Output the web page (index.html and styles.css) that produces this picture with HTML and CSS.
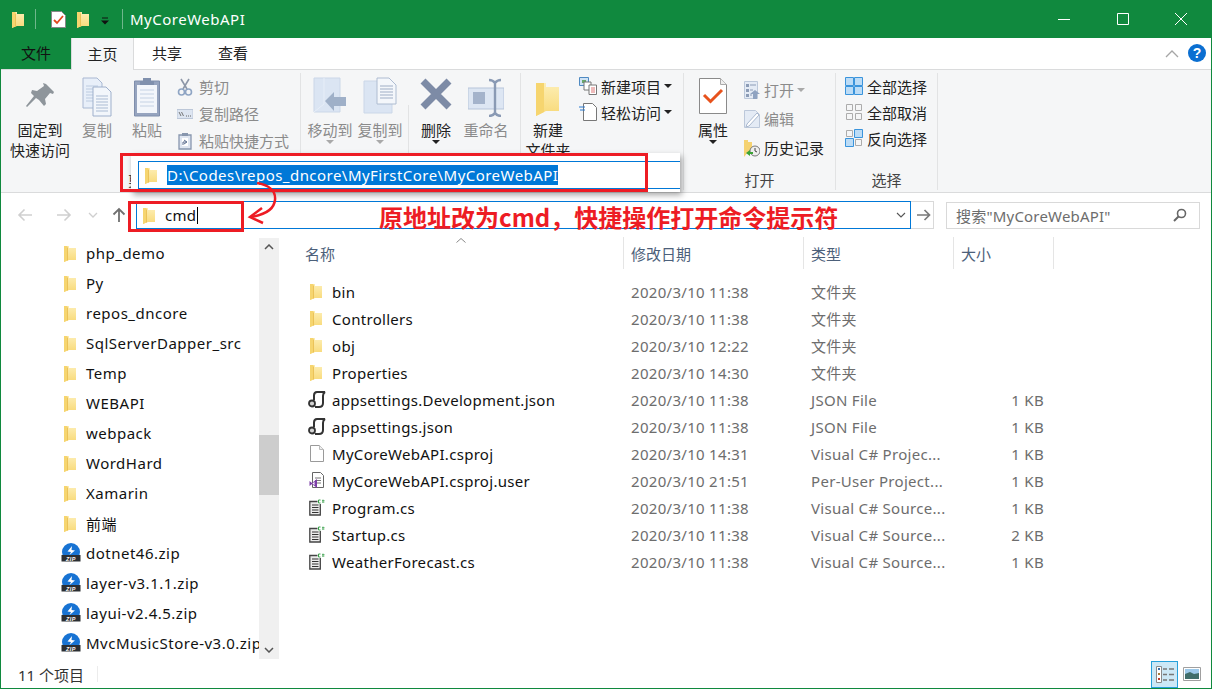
FILE: index.html
```html
<!DOCTYPE html>
<html lang="zh-CN">
<head>
<meta charset="utf-8">
<title>MyCoreWebAPI</title>
<link rel="stylesheet" href="styles.css">
</head>
<body>
<svg class="defs" width="0" height="0" aria-hidden="true">
  <defs>
    <linearGradient id="fg" x1="0" y1="0" x2="0" y2="1"><stop offset="0" stop-color="#fdeeb4"/><stop offset="1" stop-color="#f8d977"/></linearGradient>
    <symbol id="folder" viewBox="0 0 12 17">
      <path d="M0 1h5v2h7v12H5l-5 2z" fill="url(#fg)"/>
      <path d="M0 1h3.500v14.300L0 17z" fill="#f6d56f"/>
      <path d="M3.500 2.500v13" stroke="#e7bb4e" stroke-width=".8"/>
    </symbol>
    <symbol id="zip" viewBox="0 0 20 20">
      <circle cx="10" cy="9" r="9" fill="#1873d3"/>
      <path d="M11 3 6.500 8.500 10 9 8.500 12 14 7.500 10.500 7z" fill="#fff"/>
      <path d="M.5 12h19v6.500H.5z" fill="#2b2f33"/>
      <text x="10" y="17.500" class="ziptext" text-anchor="middle">ZIP</text>
    </symbol>
    <symbol id="json" viewBox="0 0 18 17">
      <path d="M6 9V4.500Q6 1 9 1h8q-2 1-2 4v7q0 4-4 4H7" fill="none" stroke="#333" stroke-width="2"/>
      <circle cx="4" cy="12.500" r="3" fill="#d4d4d4" stroke="#333" stroke-width="1.800"/>
    </symbol>
    <symbol id="file" viewBox="0 0 14 17">
      <path d="M.5.5h9l4 4v12H.5z" fill="#fff" stroke="#9a9a9a"/>
      <path d="M9.500.5v4h4" fill="#eee" stroke="#bbb"/>
    </symbol>
    <symbol id="vsuser" viewBox="0 0 16 17">
      <path d="M3.500.5h8l3 3v12h-11z" fill="#fff" stroke="#666"/>
      <path d="M6 6h6M6 8.500h6M6 11h6" stroke="#777"/>
      <path d="M.5 9l2.500 2 5-4v9l-5-4-2.500 2z" fill="#7d3ea8"/>
      <path d="M5.500 9.800v3.400L3.500 11.500z" fill="#fff"/>
    </symbol>
    <symbol id="cs" viewBox="0 0 16 17">
      <path d="M.8 2.500h10.500V16H.8z" fill="#ececec" stroke="#444" stroke-width="1.300"/>
      <path d="M3 6h6.500M3 8.500h6.500M3 11h6.500M3 13.500h6.500" stroke="#333"/>
      <path d="M8.500 0h7v5h-7z" fill="#fff"/>
      <path d="M11.500 1H9.500v3h2" fill="none" stroke="#3aa14a"/>
      <path d="M13 1.500h2.500M13 3h2.500M14 .5v3.500" stroke="#3aa14a" stroke-width=".7"/>
    </symbol>
  </defs>
</svg>

<div class="window">
  <header class="titlebar">
    <svg class="ic-f title-first"><use href="#folder"/></svg>
    <span class="tsep"></span>
    <svg class="ic-prop" viewBox="0 0 15 17"><path d="M.5.5h10l4 4v12H.5z" fill="#fff" stroke="#888"/><path d="M3 9l3 3 6-7" fill="none" stroke="#e2471a" stroke-width="1.800"/></svg>
    <svg class="ic-f title-second"><use href="#folder"/></svg>
    <svg class="ic-drop" viewBox="0 0 8 8"><path d="M1 1h6" stroke="#111" stroke-width="1"/><path d="M0 3.500h8L4 7.500z" fill="#111"/></svg>
    <span class="tsep tsep2"></span>
    <span class="title">MyCoreWebAPI</span>
    <div class="winbtns">
      <svg viewBox="0 0 12 12"><path d="M0 6.500h12" stroke="#fff"/></svg>
      <svg viewBox="0 0 12 12"><path d="M.5.5h11v11H.5z" fill="none" stroke="#fff"/></svg>
      <svg viewBox="0 0 12 12"><path d="M0 0l12 12M12 0 0 12" stroke="#fff"/></svg>
    </div>
  </header>

  <nav class="tabs">
    <span class="tab tab-file">文件</span>
    <span class="tab tab-home">主页</span>
    <span class="tab tab-share">共享</span>
    <span class="tab tab-view">查看</span>
    <svg class="tab-chevron" viewBox="0 0 14 8"><path d="M1 7l6-6 6 6" fill="none" stroke="#a6a6a6" stroke-width="1.300"/></svg>
    <span class="help">?</span>
  </nav>

  <section class="ribbon">
    <div class="group g-clip">
      <div class="group-body">
        <div class="big b-pin">
          <svg class="bigicon" viewBox="0 0 40 40"><path d="M26 7l8 8-1 2-3-1-5 6 1 5-2 2-5-6-3-2-9 9-1-1 8-10-3-3 1-3 5 1 7-5-1-3z" fill="#8e959b"/></svg>
          <span>固定到</span><span>快速访问</span>
        </div>
        <div class="big b-copy dis">
          <svg class="bigicon" viewBox="0 0 32 40"><path d="M2 1h14l5 5v25H2z" fill="#e8eff9" stroke="#a9b8d2"/><path d="M5 9h12M5 12h12M5 15h12M5 18h12M5 21h12M5 24h12" stroke="#bccbe0"/><path d="M12 10h13l5 5v24H12z" fill="#f2f6fb" stroke="#9fb0cc"/><path d="M15 19h12M15 22h12M15 25h12M15 28h12M15 31h12M15 34h12" stroke="#aabbd3"/></svg>
          <span>复制</span>
        </div>
        <div class="big b-paste dis">
          <svg class="bigicon" viewBox="0 0 28 40"><path d="M1.500 4h25v35h-25z" fill="#96a4bf" stroke="#7f8eac"/><path d="M4 8h20v28H4z" fill="#f3f6fb"/><path d="M10 1h8v3h3v4H7V4h3z" fill="#8090ad"/><path d="M7 13h14M7 17h14M7 21h14M7 25h14M7 29h14" stroke="#c5d2e4"/></svg>
          <span>粘贴</span>
        </div>
        <div class="smalls s-clip dis">
          <div class="small"><svg class="smicon" viewBox="0 0 16 18"><path d="M4 1l6 10M12 1 6 11" stroke="#8d97a8" stroke-width="1.600"/><circle cx="4.500" cy="14" r="3" fill="none" stroke="#8fa5c4" stroke-width="1.600"/><circle cx="11.500" cy="14" r="3" fill="none" stroke="#8fa5c4" stroke-width="1.600"/></svg><span>剪切</span></div>
          <div class="small"><svg class="smicon" viewBox="0 0 16 18"><path d="M0 4.500h16v9H0z" fill="#dde5f1" stroke="#bcc7d8"/><path d="M2 7l2 4M4.500 7l2 4" stroke="#666" stroke-width=".9"/><path d="M9 11h1M11 11h1M13 11h1" stroke="#666"/></svg><span>复制路径</span></div>
          <div class="small"><svg class="smicon" viewBox="0 0 16 18"><path d="M2 3h12v14H2z" fill="#dfe6f1" stroke="#8796ae" stroke-width="1.300"/><path d="M5 1h6v3H5z" fill="#8796ae"/><path d="M5 6h6v8H5z" fill="#fff"/><path d="M6 13V10h3M7 8l3 2-3 2" fill="none" stroke="#5a6d8e"/></svg><span>粘贴快捷方式</span></div>
        </div>
      </div>
      <div class="group-label">剪贴板</div>
    </div>

    <div class="group g-org">
      <div class="group-body">
        <div class="big b-move dis">
          <svg class="bigicon" viewBox="0 0 34 40"><path d="M1 1h26v34H1z" fill="#dbe5f3" stroke="#cbd7e8"/><path d="M1 35l10-8V1" fill="none" stroke="#e7eef8"/><path d="M12 24l9-9v5h12v9H21v5z" fill="#9fb0c8"/></svg>
          <span>移动到</span><i class="caret"></i>
        </div>
        <div class="big b-copyto dis">
          <svg class="bigicon" viewBox="0 0 34 40"><path d="M1 4h28v32H1z" fill="#dbe5f3" stroke="#cbd7e8"/><path d="M14 1h12l7 7v19H14z" fill="#f4f7fb" stroke="#aebcd1"/><path d="M17 9h13M17 12h13M17 15h13M17 18h13M17 21h13" stroke="#9eadc5"/></svg>
          <span>复制到</span><i class="caret"></i>
        </div>
        <span class="vsep"></span>
        <div class="big b-del">
          <svg class="bigicon" viewBox="0 0 32 40"><path d="M3 4l26 26M29 4 3 30" stroke="#7d8ba6" stroke-width="7"/></svg>
          <span>删除</span><i class="caret dark"></i>
        </div>
        <div class="big b-ren dis">
          <svg class="bigicon" viewBox="0 0 36 40"><path d="M0 11h36v21H0z" fill="#dde6f3" stroke="#b7c5da"/><path d="M5 15h12v12H5z" fill="#a4b3cb"/><path d="M21 3q4 0 6 3 2-3 6-3M27 6v30M21 39q4 0 6-3 2 3 6 3" fill="none" stroke="#8a9ab4" stroke-width="2.400"/></svg>
          <span>重命名</span>
        </div>
      </div>
      <div class="group-label"></div>
    </div>

    <div class="group g-new">
      <div class="group-body">
        <div class="big b-newf">
          <svg class="bigicon" viewBox="0 0 24 36"><path d="M0 2h10v4h13v24H10L0 35z" fill="url(#fg)"/><path d="M0 2h8v29l-8 4z" fill="#f6d56f"/></svg>
          <span>新建</span><span>文件夹</span>
        </div>
        <div class="smalls s-new">
          <div class="small"><svg class="smicon" viewBox="0 0 18 18"><path d="M.5.5h9v8h-9z" fill="#cfe3f5" stroke="#4f8ac2"/><path d="M3 3h4v3H3z" fill="#6aa76a"/><path d="M5 5h7v8H5z" fill="#fff" stroke="#777"/><path d="M10 8h7.500v9.500H10z" fill="#fff" stroke="#777"/><path d="M12 11h4M12 13h4M12 15h4" stroke="#d77"/></svg><span>新建项目</span><i class="caret dark inl"></i></div>
          <div class="small"><svg class="smicon" viewBox="0 0 18 18"><path d="M4.500.5h9l4 4v13h-13z" fill="#fff" stroke="#777"/><path d="M0 4h6M1 7h5" stroke="#2a7ad0"/></svg><span>轻松访问</span><i class="caret dark inl"></i></div>
        </div>
      </div>
      <div class="group-label"></div>
    </div>

    <div class="group g-open">
      <div class="group-body">
        <div class="big b-prop">
          <svg class="bigicon" viewBox="0 0 30 40"><path d="M1.500 1.500h21l6 6v29h-27z" fill="#fff" stroke="#8a8a8a"/><path d="M22.500 1.500v6h6" fill="#eee" stroke="#aaa"/><path d="M6 18l6.500 6.500L24 13" fill="none" stroke="#e7521c" stroke-width="3"/></svg>
          <span>属性</span><i class="caret dark"></i>
        </div>
        <div class="smalls s-open">
          <div class="small dis"><svg class="smicon" viewBox="0 0 16 18"><path d="M.5.500h13v17H.5z" fill="#e4ebf5" stroke="#bcc8da"/><path d="M2 3h3v3H2zM2 8h3v3H2zM2 13h3v3H2z" fill="#8c9cb6"/><path d="M6 4h6M6 9h3M6 14h2" stroke="#8c9cb6"/><path d="M11 9l5 4h-3v5H9v-5H6z" fill="#8fa3c1"/></svg><span>打开</span><i class="caret inl"></i></div>
          <div class="small dis"><svg class="smicon" viewBox="0 0 16 18"><path d="M.5.500h11l4 4v13H.5z" fill="#e4ebf5" stroke="#bcc8da"/><path d="M3 14L13 3l2 2L5 16l-3 1z" fill="#fff" stroke="#aab9cf"/></svg><span>编辑</span></div>
          <div class="small"><svg class="smicon" viewBox="0 0 16 18"><path d="M0 1h4v2h4v10H4l-4 5z" fill="#f5d271"/><circle cx="11" cy="12" r="5" fill="#eee" stroke="#777"/><path d="M11 9v3l2 1" fill="none" stroke="#444"/><path d="M2 14l4-3v2h3v2H6v2z" fill="#3aa335"/></svg><span>历史记录</span></div>
        </div>
      </div>
      <div class="group-label">打开</div>
    </div>

    <div class="group g-sel">
      <div class="group-body">
        <div class="smalls s-sel">
          <div class="small"><svg class="smicon" viewBox="0 0 18 18"><path d="M.5.500h8v8h-8zM9.500.500h8v8h-8zM.5 9.500h8v8h-8zM9.500 9.500h8v8h-8z" fill="#bcdcf6" stroke="#3a94dc"/></svg><span>全部选择</span></div>
          <div class="small"><svg class="smicon" viewBox="0 0 18 18"><path d="M1.500 1.500h6v6h-6zM10.500 1.500h6v6h-6zM1.500 10.500h6v6h-6zM10.500 10.500h6v6h-6z" fill="#f5f6f7" stroke="#acacac"/></svg><span>全部取消</span></div>
          <div class="small"><svg class="smicon" viewBox="0 0 18 18"><path d="M1.500 1.500h6v6h-6zM10.500 10.500h6v6h-6z" fill="#f5f6f7" stroke="#acacac"/><path d="M9.500.500h8v8h-8zM.5 9.500h8v8h-8z" fill="#bcdcf6" stroke="#3a94dc"/></svg><span>反向选择</span></div>
        </div>
      </div>
      <div class="group-label">选择</div>
    </div>
  </section>

  <section class="addressbar">
    <svg class="navbtn n-back" viewBox="0 0 16 14"><path d="M15 7H2M7.500 1.500 2 7l5.500 5.500" fill="none" stroke="#cfcfcf" stroke-width="1.600"/></svg>
    <svg class="navbtn n-fwd" viewBox="0 0 16 14"><path d="M1 7h13M8.500 1.500 14 7l-5.500 5.500" fill="none" stroke="#cfcfcf" stroke-width="1.600"/></svg>
    <svg class="navbtn n-down" viewBox="0 0 10 6"><path d="M1 1l4 4 4-4" fill="none" stroke="#cfcfcf" stroke-width="1.300"/></svg>
    <svg class="navbtn n-up" viewBox="0 0 14 16"><path d="M7 15V2M1.500 7.500 7 2l5.500 5.500" fill="none" stroke="#707070" stroke-width="1.800"/></svg>
    <div class="addr">
      <svg class="ic-f"><use href="#folder"/></svg>
      <span class="addr-text">cmd</span><i class="textcaret"></i>
      <svg class="addr-chev" viewBox="0 0 10 6"><path d="M1 1l4 4 4-4" fill="none" stroke="#555" stroke-width="1.100"/></svg>
    </div>
    <div class="go"><svg viewBox="0 0 14 12"><path d="M0 6h12M7.500 1 12.500 6l-5 5" fill="none" stroke="#7a7a7a" stroke-width="1.700"/></svg></div>
    <div class="search">
      <span>搜索"MyCoreWebAPI"</span>
      <svg viewBox="0 0 14 14"><circle cx="8.500" cy="5.500" r="4" fill="none" stroke="#666" stroke-width="1.600"/><path d="M5.500 8.500 1 13" stroke="#666" stroke-width="2"/></svg>
    </div>
  </section>

  <main class="content">
    <aside class="nav">
      <ul class="navlist">
        <li><svg class="ic-f"><use href="#folder"/></svg><span>php_demo</span></li>
        <li><svg class="ic-f"><use href="#folder"/></svg><span>Py</span></li>
        <li><svg class="ic-f"><use href="#folder"/></svg><span>repos_dncore</span></li>
        <li><svg class="ic-f"><use href="#folder"/></svg><span>SqlServerDapper_src</span></li>
        <li><svg class="ic-f"><use href="#folder"/></svg><span>Temp</span></li>
        <li><svg class="ic-f"><use href="#folder"/></svg><span>WEBAPI</span></li>
        <li><svg class="ic-f"><use href="#folder"/></svg><span>webpack</span></li>
        <li><svg class="ic-f"><use href="#folder"/></svg><span>WordHard</span></li>
        <li><svg class="ic-f"><use href="#folder"/></svg><span>Xamarin</span></li>
        <li><svg class="ic-f"><use href="#folder"/></svg><span>前端</span></li>
        <li class="z"><svg class="ic-z"><use href="#zip"/></svg><span>dotnet46.zip</span></li>
        <li class="z"><svg class="ic-z"><use href="#zip"/></svg><span>layer-v3.1.1.zip</span></li>
        <li class="z"><svg class="ic-z"><use href="#zip"/></svg><span>layui-v2.4.5.zip</span></li>
        <li class="z"><svg class="ic-z"><use href="#zip"/></svg><span>MvcMusicStore-v3.0.zip</span></li>
      </ul>
      <div class="scroll">
        <svg class="sb-up" viewBox="0 0 10 6"><path d="M1 5l4-4 4 4" fill="none" stroke="#555" stroke-width="1.500"/></svg>
        <div class="thumb"></div>
        <svg class="sb-down" viewBox="0 0 10 6"><path d="M1 1l4 4 4-4" fill="none" stroke="#555" stroke-width="1.500"/></svg>
      </div>
    </aside>
    <div class="details">
      <div class="dhead">
        <span class="c-name">名称</span>
        <span class="c-date">修改日期</span>
        <span class="c-type">类型</span>
        <span class="c-size">大小</span>
        <svg class="sortarrow" viewBox="0 0 10 5"><path d="M.5 4.500 5 .5l4.500 4" fill="none" stroke="#8a8a8a"/></svg>
      </div>
      <div class="row"><span class="c-name"><svg class="ic-f"><use href="#folder"/></svg>bin</span><span class="c-date">2020/3/10 11:38</span><span class="c-type">文件夹</span><span class="c-size"></span></div>
      <div class="row"><span class="c-name"><svg class="ic-f"><use href="#folder"/></svg>Controllers</span><span class="c-date">2020/3/10 11:38</span><span class="c-type">文件夹</span><span class="c-size"></span></div>
      <div class="row"><span class="c-name"><svg class="ic-f"><use href="#folder"/></svg>obj</span><span class="c-date">2020/3/10 12:22</span><span class="c-type">文件夹</span><span class="c-size"></span></div>
      <div class="row"><span class="c-name"><svg class="ic-f"><use href="#folder"/></svg>Properties</span><span class="c-date">2020/3/10 14:30</span><span class="c-type">文件夹</span><span class="c-size"></span></div>
      <div class="row"><span class="c-name"><svg class="ic-j"><use href="#json"/></svg>appsettings.Development.json</span><span class="c-date">2020/3/10 11:38</span><span class="c-type">JSON File</span><span class="c-size">1 KB</span></div>
      <div class="row"><span class="c-name"><svg class="ic-j"><use href="#json"/></svg>appsettings.json</span><span class="c-date">2020/3/10 11:38</span><span class="c-type">JSON File</span><span class="c-size">1 KB</span></div>
      <div class="row"><span class="c-name"><svg class="ic-d"><use href="#file"/></svg>MyCoreWebAPI.csproj</span><span class="c-date">2020/3/10 14:31</span><span class="c-type">Visual C# Projec...</span><span class="c-size">1 KB</span></div>
      <div class="row"><span class="c-name"><svg class="ic-v"><use href="#vsuser"/></svg>MyCoreWebAPI.csproj.user</span><span class="c-date">2020/3/10 21:51</span><span class="c-type">Per-User Project...</span><span class="c-size">1 KB</span></div>
      <div class="row"><span class="c-name"><svg class="ic-v"><use href="#cs"/></svg>Program.cs</span><span class="c-date">2020/3/10 11:38</span><span class="c-type">Visual C# Source...</span><span class="c-size">1 KB</span></div>
      <div class="row"><span class="c-name"><svg class="ic-v"><use href="#cs"/></svg>Startup.cs</span><span class="c-date">2020/3/10 11:38</span><span class="c-type">Visual C# Source...</span><span class="c-size">2 KB</span></div>
      <div class="row"><span class="c-name"><svg class="ic-v"><use href="#cs"/></svg>WeatherForecast.cs</span><span class="c-date">2020/3/10 11:38</span><span class="c-type">Visual C# Source...</span><span class="c-size">1 KB</span></div>
    </div>
  </main>

  <footer class="status">
    <span class="count">11 个项目</span>
    <span class="status-sep"></span>
    <div class="views">
      <div class="view-on"><svg viewBox="0 0 18 17"><path d="M.5.500h5v16h-5z" fill="#fff" stroke="#8a8a8a"/><path d="M2 2h2v2H2z" fill="#3b6fa8"/><path d="M2 7h2v2H2z" fill="#a87a3b"/><path d="M2 12h2v2H2z" fill="#c0392b"/><path d="M7 3h4M13 3h5M7 8.500h4M13 8.500h5M7 14h4M13 14h5" stroke="#777" stroke-width="1.400"/></svg></div>
      <svg class="view-off" viewBox="0 0 18 14"><path d="M.5.500h17v13H.5z" fill="#fff" stroke="#a0a0a0"/><path d="M2 2h14v5H2z" fill="#9cc9ea"/><path d="M2 7l5-2 4 2 5-1v6H2z" fill="#3f6d6a"/></svg>
    </div>
  </footer>

  <div class="popup">
    <div class="popup-field">
      <svg class="ic-f"><use href="#folder"/></svg>
      <span class="selected">D:\Codes\repos_dncore\MyFirstCore\MyCoreWebAPI</span>
    </div>
  </div>
  <div class="redbox rb-top"></div>
  <div class="redbox rb-cmd"></div>
  <svg class="redarrow" viewBox="0 0 40 50"><path d="M10 1C22 3 29 9 28 18 27 28 16 33 4 35" fill="none" stroke="#ed1c24" stroke-width="2.500"/><path d="M15 26 3 35l13 6" fill="none" stroke="#ed1c24" stroke-width="2.500"/></svg>
  <div class="note">原地址改为cmd，快捷操作打开命令提示符</div>
</div>
</body>
</html>
```

FILE: styles.css
```css
* { box-sizing: border-box; }
html, body { margin: 0; padding: 0; }
body { font-family: "Noto Sans", "Noto Sans CJK SC", sans-serif; font-size: 15px; color: #1a1a1a; overflow: hidden; }
ul { list-style: none; margin: 0; padding: 0; }
svg { display: block; flex: none; }
.defs { position: absolute; }
.ziptext { font: italic bold 5.500px "Liberation Sans", sans-serif; fill: #fff; }

.window { position: relative; width: 1212px; height: 689px; display: flex; flex-direction: column; background: #fff; border: 1px solid #10893e; border-top: 0; overflow: hidden; }

.ic-f { width: 12px; height: 17px; }
.ic-z { width: 20px; height: 20px; }
.ic-j { width: 18px; height: 17px; }
.ic-d { width: 14px; height: 17px; }
.ic-v { width: 16px; height: 17px; }

/* title bar */
.titlebar { height: 38px; background: #10893e; display: flex; align-items: center; margin: 0 -1px; padding-left: 12px; flex: none; }
.title-second { margin-left: 11px; }
.tsep { width: 1px; height: 20px; background: #6fb78c; margin: 0 15px 0 11px; }
.tsep2 { margin: 0 7px 0 13px; }
.ic-prop { width: 15px; height: 17px; }
.ic-drop { width: 8px; height: 8px; margin-left: 12px; margin-top: 3px; }
.title { color: #fff; font-size: 15px; letter-spacing: .5px; }
.winbtns { margin-left: auto; display: flex; gap: 46.500px; padding-right: 25px; }
.winbtns svg { width: 12px; height: 12px; }

/* tabs */
.tabs { height: 32px; flex: none; display: flex; align-items: stretch; position: relative; background: #fff; border-bottom: 1px solid #dadbdc; }
.tab { width: 63px; display: flex; align-items: center; justify-content: center; color: #222; padding-bottom: 2px; }
.tab-file { width: 70px; background: #10893e; color: #111; }
.tab-home { background: #f5f6f7; border: 1px solid #dadbdc; border-bottom: 0; border-top: 0; margin-bottom: -1px; }
.tab-share { width: 66px; }
.tab-view { width: 66px; }
.tab-chevron { width: 14px; height: 8px; margin: 12px 0 0 auto; }
.help { width: 18px; height: 18px; border-radius: 50%; background: #0b6fd1; color: #fff; font: bold 14px/18px "Liberation Sans", sans-serif; text-align: center; margin: 6px 5px 0 9px; }

/* ribbon */
.ribbon { height: 123px; flex: none; display: flex; background: #f5f6f7; border-bottom: 1px solid #dadbdc; padding: 3px 0 2px; color: #222; }
.group { display: flex; flex-direction: column; border-right: 1px solid #e2e3e4; height: 117px; }
.group-body { flex: 1; display: flex; min-height: 0; padding-top: 2px; }
.group-label { height: 20px; line-height: 20px; text-align: center; color: #444; flex: none; }
.g-clip { width: 300px; }
.g-org { width: 220px; }
.g-new { width: 163px; }
.g-open { width: 152px; }
.g-sel { width: 102px; }
.dis { color: #8b8b8b; }
.big { display: flex; flex-direction: column; align-items: center; line-height: 20px; white-space: nowrap; }
.bigicon { height: 40px; margin: 2px 0 3px; }
.b-pin { width: 60px; margin-left: 9px; }
.b-pin .bigicon { width: 40px; }
.b-copy { width: 44px; margin-left: 5px; }
.b-copy .bigicon { width: 32px; }
.b-paste { width: 44px; margin-left: 6px; }
.b-paste .bigicon { width: 28px; }
.b-move { width: 50px; margin-left: 4px; }
.b-move .bigicon { width: 34px; }
.b-copyto { width: 50px; }
.b-copyto .bigicon { width: 34px; }
.vsep { width: 1px; margin: 30px 0 0 3px; height: 52px; background: #e2e3e4; }
.b-del { width: 54px; }
.b-del .bigicon { width: 32px; }
.b-ren { width: 46px; }
.b-ren .bigicon { width: 36px; }
.b-newf { width: 54px; }
.b-newf .bigicon { width: 24px; height: 36px; margin: 6px 0 3px; }
.b-prop { width: 58px; }
.b-prop .bigicon { width: 30px; }
.caret { width: 0; height: 0; border: 4px solid transparent; border-top-color: #a9a9a9; border-bottom: 0; display: block; }
.caret.dark { border-top-color: #222; }
.caret.inl { margin: 0 0 0 -1px; }
.smalls { display: flex; flex-direction: column; margin-top: -2px; }
.small { display: flex; align-items: center; gap: 6px; height: 27px; white-space: nowrap; }
.smicon { width: 16px; height: 18px; }
.s-clip { margin-left: 8px; }
.s-new { margin-left: 4px; }
.s-new .small { gap: 4px; height: 26px; }
.s-new .smicon { width: 18px; }
.s-open { margin: 0 0 0 2px; }
.s-open .small { height: 29px; gap: 4px; }
.s-sel { margin-left: 9px; }
.s-sel .small { height: 26px; gap: 4px; }
.s-sel .smicon { width: 18px; }

/* address bar */
.addressbar { height: 42px; flex: none; display: flex; align-items: center; background: #fff; padding-top: 2px; }
.navbtn { flex: none; }
.n-back { width: 16px; height: 14px; margin-left: 16px; }
.n-fwd { width: 16px; height: 14px; margin-left: 23px; }
.n-down { width: 10px; height: 6px; margin-left: 16px; }
.n-up { width: 14px; height: 16px; margin-left: 14px; }
.addr { width: 775px; height: 28px; margin-left: 10px; border: 1px solid #0078d7; display: flex; align-items: center; padding-left: 6px; background: #fff; }
.addr-text { margin-left: 10px; color: #111; letter-spacing: .3px; }
.textcaret { width: 1px; height: 17px; background: #000; margin-left: 1px; }
.addr-chev { width: 10px; height: 6px; margin-left: auto; margin-right: 4px; }
.go { width: 23px; height: 28px; border: 1px solid #d9d9d9; border-left: 0; display: flex; align-items: center; justify-content: center; padding-left: 3px; }
.go svg { width: 14px; height: 12px; }
.search { width: 254px; height: 27px; margin-left: 12px; border: 1px solid #d9d9d9; display: flex; align-items: center; justify-content: space-between; padding: 0 12px 0 9px; color: #6d6d6d; letter-spacing: .2px; }
.search svg { width: 14px; height: 14px; }

/* content */
.content { flex: 1; display: flex; min-height: 0; }
.nav { width: 279px; display: flex; flex: none; padding-top: 3px; }
.navlist { width: 258px; overflow: hidden; flex: none; }
.navlist li { height: 30px; display: flex; align-items: center; padding-left: 63px; white-space: nowrap; color: #111; letter-spacing: .5px; }
.navlist li span { margin-left: 10px; }
.navlist li.z { padding-left: 60px; }
.navlist li.z span { margin-left: 5px; }
.scroll { width: 20px; height: 421px; background: #f0f0f0; position: relative; flex: none; display: flex; flex-direction: column; align-items: center; padding: 6px 0; }
.sb-up, .sb-down { width: 10px; height: 6px; }
.thumb { width: 20px; height: 60px; background: #cdcdcd; margin-top: 185px; }
.sb-down { margin-top: auto; }
.details { flex: 1; padding-top: 2px; position: relative; min-width: 0; }
.dhead { height: 32px; margin-bottom: 9px; display: flex; align-items: center; color: #4c607a; position: relative; }
.dhead span { height: 32px; display: flex; align-items: center; border-right: 1px solid #e5e5e5; }
.c-name { width: 344px; padding-left: 25px; display: flex; align-items: center; white-space: nowrap; }
.c-date { width: 180px; padding-left: 7px; }
.c-type { width: 150px; padding-left: 7px; white-space: nowrap; }
.c-size { width: 100px; text-align: right; padding-right: 10px; }
.dhead .c-size { padding-left: 7px; }
.sortarrow { position: absolute; left: 176px; top: 1px; width: 10px; height: 5px; }
.row { height: 27px; display: flex; align-items: center; color: #6d6d6d; letter-spacing: .3px; }
.row .c-name { color: #111; padding-left: 26px; }
.row .c-name svg { margin-right: 10px; }
.row .c-name .ic-f { margin-left: 4px; }
.row .c-name .ic-j { margin-left: 2px; margin-right: 6px; }
.row .c-name .ic-d { margin-left: 4px; margin-right: 8px; }
.row .c-name .ic-v { margin-left: 3px; margin-right: 7px; }

/* status */
.status { height: 28px; flex: none; display: flex; align-items: center; padding-left: 17px; color: #333; background: #fff; }
.count { width: 79px; }
.status-sep { width: 1px; height: 16px; background: #ececec; }
.views { margin-left: auto; display: flex; align-items: center; gap: 5px; padding-right: 10px; }
.view-on { width: 27px; height: 27px; background: #cce8f6; border: 1px solid #26a0da; display: flex; align-items: center; justify-content: center; }
.view-on svg { width: 18px; height: 17px; }
.view-off { width: 18px; height: 14px; }

/* annotation overlays */
.popup { position: absolute; left: 130px; top: 153px; width: 549px; height: 39px; background: #fff; box-shadow: 2px 3px 6px rgba(0,0,0,.35); padding-top: 8px; padding-left: 7px; }
.popup-field { height: 28px; border: 1px solid #0078d7; border-right: 0; display: flex; align-items: center; padding-left: 6px; }
.selected { background: #0078d7; color: #fff; margin-left: 10px; line-height: 20px; white-space: nowrap; letter-spacing: .46px; }
.redbox { position: absolute; border: 3px solid #ed1c24; }
.rb-top { left: 119px; top: 153px; width: 528px; height: 39px; }
.rb-cmd { left: 127px; top: 201px; width: 116px; height: 31px; }
.redarrow { position: absolute; left: 246px; top: 182px; width: 40px; height: 50px; }
.note { position: absolute; left: 378px; top: 200px; font: 700 24px/34px "Noto Sans CJK SC", "Noto Sans", sans-serif; color: #ed1c24; white-space: nowrap; }
```
